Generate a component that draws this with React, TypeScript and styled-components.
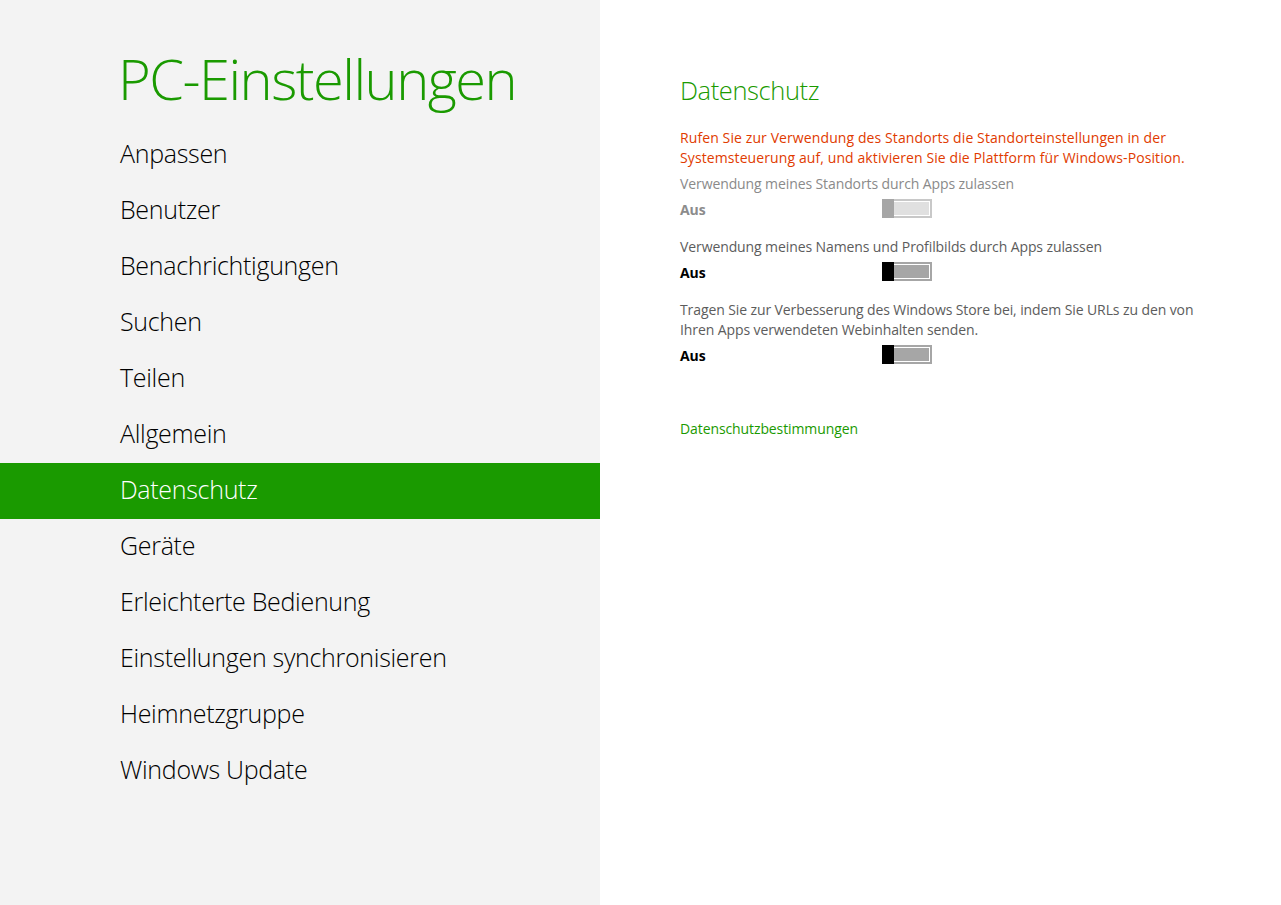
import styled, { createGlobalStyle } from "styled-components";

const GlobalStyle = createGlobalStyle`
  html, body {
    margin: 0;
    padding: 0;
    background: #ffffff;
    font-family: "Open Sans", "Noto Sans", sans-serif;
  }
`;

const Page = styled.div`
  display: flex;
  width: 1281px;
  height: 905px;
  overflow: hidden;
`;

const Sidebar = styled.nav`
  width: 600px;
  flex-shrink: 0;
  background: #f3f3f3;
  display: flex;
  flex-direction: column;
`;

const AppTitle = styled.h1`
  margin: 0;
  height: 127px;
  box-sizing: border-box;
  padding: 38px 0 0 118px;
  font-size: 56px;
  font-weight: 300;
  line-height: 80px;
  color: #1a9a00;
  letter-spacing: -1.5px;
`;

const NavItem = styled.div<{ active?: boolean }>`
  height: 56px;
  box-sizing: border-box;
  display: flex;
  align-items: center;
  padding: 0 0 5px 120px;
  font-size: 25px;
  font-weight: 300;
  letter-spacing: -0.3px;
  color: ${(p) => (p.active ? "#ffffff" : "#000000")};
  background: ${(p) => (p.active ? "#1a9a00" : "transparent")};
`;

const Content = styled.main`
  flex: 1;
  padding: 72px 0 0 80px;
  display: flex;
  flex-direction: column;
`;

const SectionTitle = styled.h2`
  margin: 0 0 20px;
  font-size: 25.5px;
  font-weight: 300;
  line-height: 36px;
  color: #1a9a00;
  letter-spacing: -0.4px;
`;

const Text = styled.p<{ tone?: "error" | "muted" | "normal" }>`
  margin: 0;
  font-size: 14px;
  line-height: 20px;
  letter-spacing: ${(p) => (p.tone === "error" ? "0.1px" : "-0.1px")};
  color: ${(p) =>
    p.tone === "error" ? "#e13b00" : p.tone === "muted" ? "#8a8a8a" : "#5c5c5c"};
`;

const Setting = styled.div`
  display: flex;
  flex-direction: column;
  margin-bottom: 16px;

  &:first-of-type {
    margin-top: 6px;
  }
`;

const ToggleRow = styled.div`
  display: flex;
  align-items: center;
  height: 26px;
  margin-top: 1px;
`;

const State = styled.span<{ disabled?: boolean }>`
  width: 202px;
  padding-top: 2px;
  font-size: 14px;
  font-weight: 700;
  letter-spacing: -0.1px;
  color: ${(p) => (p.disabled ? "#8c8c8c" : "#000000")};
`;

const Track = styled.div<{ disabled?: boolean }>`
  position: relative;
  width: 50px;
  height: 19px;
  box-sizing: border-box;
  border: 2px solid ${(p) => (p.disabled ? "#c8c8c8" : "#a6a6a6")};
  outline: 1px solid #ffffff;
  outline-offset: -3px;
  background: ${(p) => (p.disabled ? "#e0e0e0" : "#a6a6a6")};
`;

const Thumb = styled.div<{ disabled?: boolean }>`
  position: absolute;
  left: -2px;
  top: -2px;
  width: 12px;
  height: 19px;
  background: ${(p) => (p.disabled ? "#a6a6a6" : "#000000")};
`;

const Link = styled.a`
  margin-top: 36px;
  font-size: 14px;
  line-height: 20px;
  letter-spacing: -0.1px;
  color: #1a9a00;
  text-decoration: none;
`;

const navItems = [
  "Anpassen",
  "Benutzer",
  "Benachrichtigungen",
  "Suchen",
  "Teilen",
  "Allgemein",
  "Datenschutz",
  "Geräte",
  "Erleichterte Bedienung",
  "Einstellungen synchronisieren",
  "Heimnetzgruppe",
  "Windows Update",
];

function Toggle({ disabled }: { disabled?: boolean }) {
  return (
    <ToggleRow>
      <State disabled={disabled}>Aus</State>
      <Track disabled={disabled}>
        <Thumb disabled={disabled} />
      </Track>
    </ToggleRow>
  );
}

export default function App() {
  return (
    <>
      <GlobalStyle />
      <Page>
        <Sidebar>
          <AppTitle>PC-Einstellungen</AppTitle>
          {navItems.map((item) => (
            <NavItem key={item} active={item === "Datenschutz"}>
              {item}
            </NavItem>
          ))}
        </Sidebar>
        <Content>
          <SectionTitle>Datenschutz</SectionTitle>
          <Text tone="error">
            Rufen Sie zur Verwendung des Standorts die Standorteinstellungen in der
            <br />
            Systemsteuerung auf, und aktivieren Sie die Plattform für Windows-Position.
          </Text>
          <Setting>
            <Text tone="muted">Verwendung meines Standorts durch Apps zulassen</Text>
            <Toggle disabled />
          </Setting>
          <Setting>
            <Text>Verwendung meines Namens und Profilbilds durch Apps zulassen</Text>
            <Toggle />
          </Setting>
          <Setting>
            <Text>
              Tragen Sie zur Verbesserung des Windows Store bei, indem Sie URLs zu den von
              <br />
              Ihren Apps verwendeten Webinhalten senden.
            </Text>
            <Toggle />
          </Setting>
          <Link href="#">Datenschutzbestimmungen</Link>
        </Content>
      </Page>
    </>
  );
}
